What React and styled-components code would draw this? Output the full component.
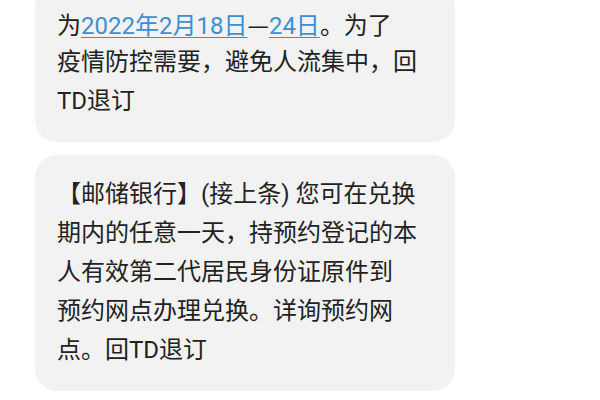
import React from "react"
import styled, { createGlobalStyle } from "styled-components"

const GlobalStyle = createGlobalStyle`
  html, body {
    margin: 0;
    padding: 0;
    background: #ffffff;
    overflow: hidden;
  }
  body {
    font-family: Roboto, "Noto Sans CJK SC", sans-serif;
  }
`

const Thread = styled.div`
  width: 600px;
  display: flex;
  flex-direction: column;
  gap: 13px;
  padding-left: 35px;
  margin-top: -16px;
  box-sizing: border-box;
`

const Bubble = styled.div`
  width: 420px;
  box-sizing: border-box;
  background: #f2f2f2;
  border-radius: 22px;
  padding: 20px 20px 21px 22px;
  color: #222222;
  font-size: 24px;
  line-height: 39px;
`

const Line = styled.div`
  height: 39px;
  white-space: nowrap;
`

const Link = styled.span`
  color: #3d8fd3;
  text-decoration: underline;
  text-decoration-thickness: 1px;
  text-underline-offset: 3px;
`

const Dash = styled.span`
  font-family: "Noto Sans CJK SC", sans-serif;
`

const App = () => {
  return (
    <>
      <GlobalStyle />
      <Thread>
        <Bubble>
          <Line>
            为<Link>2022年2月18日</Link>
            <Dash>—</Dash>
            <Link>24日</Link>。为了
          </Line>
          <Line>疫情防控需要，避免人流集中，回</Line>
          <Line>TD退订</Line>
        </Bubble>
        <Bubble>
          <Line>【邮储银行】(接上条) 您可在兑换</Line>
          <Line>期内的任意一天，持预约登记的本</Line>
          <Line>人有效第二代居民身份证原件到</Line>
          <Line>预约网点办理兑换。详询预约网</Line>
          <Line>点。回TD退订</Line>
        </Bubble>
      </Thread>
    </>
  )
}

export default App
